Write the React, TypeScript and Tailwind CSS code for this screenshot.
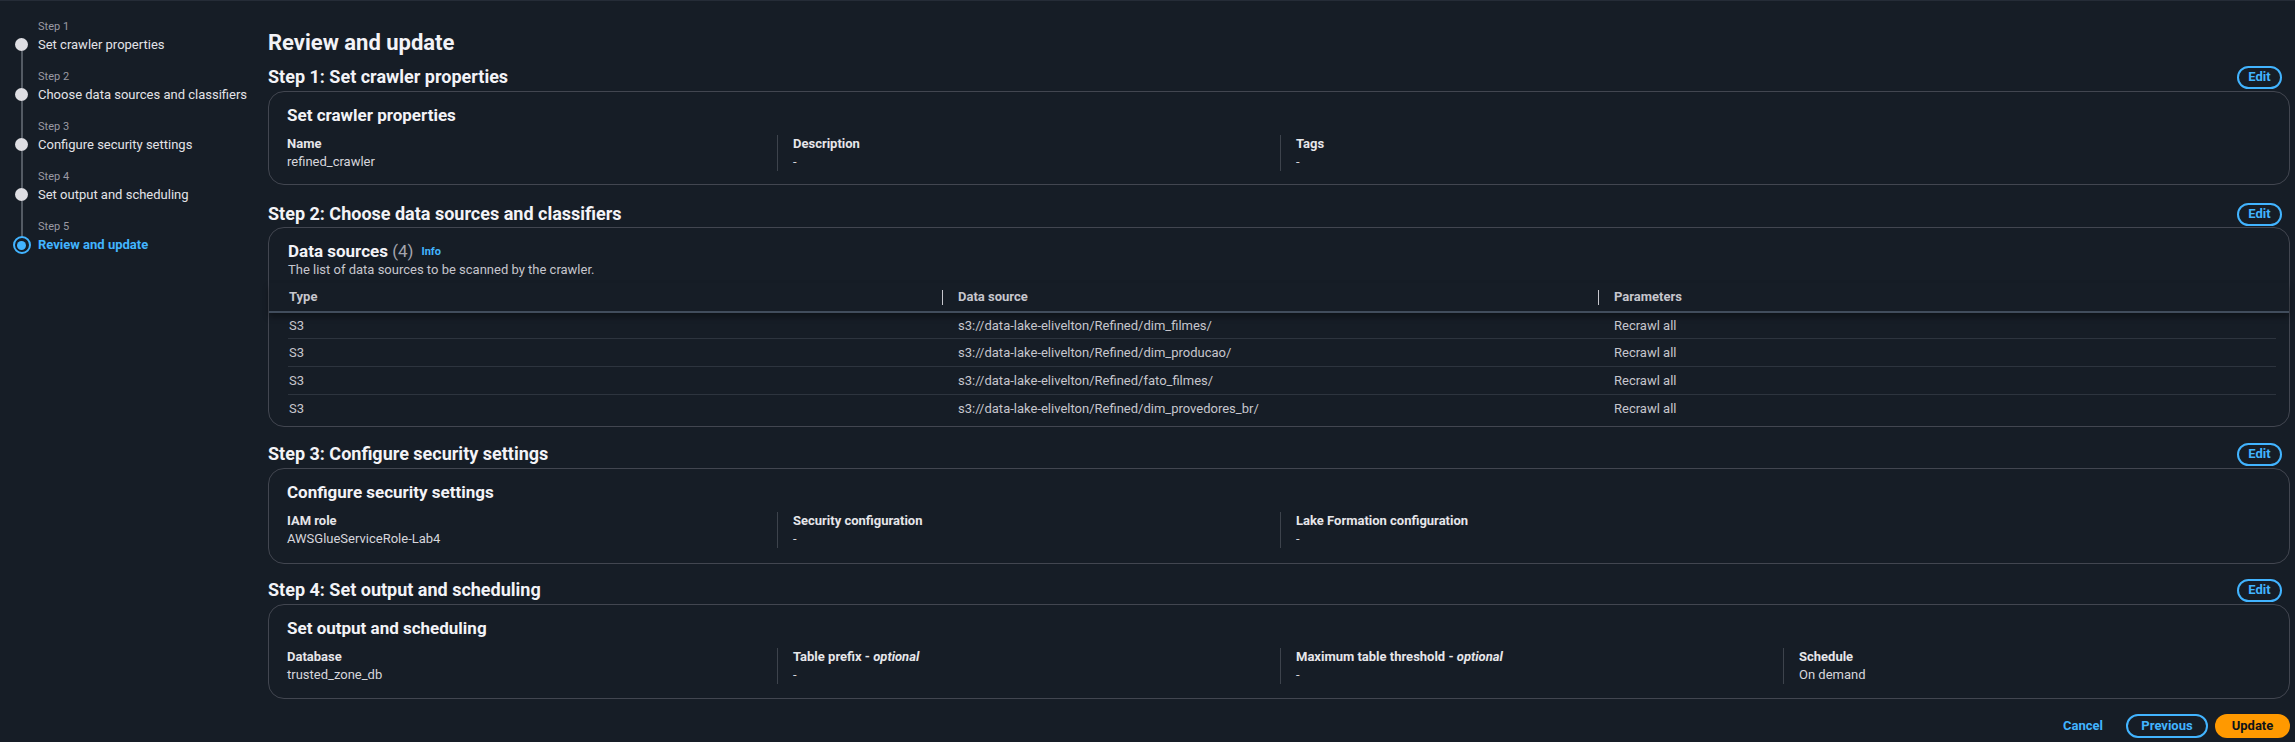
import React from "react";

const steps = [
  "Set crawler properties",
  "Choose data sources and classifiers",
  "Configure security settings",
  "Set output and scheduling",
  "Review and update",
];

const sources = [
  "s3://data-lake-elivelton/Refined/dim_filmes/",
  "s3://data-lake-elivelton/Refined/dim_producao/",
  "s3://data-lake-elivelton/Refined/fato_filmes/",
  "s3://data-lake-elivelton/Refined/dim_provedores_br/",
];

type Item = { label: string; optional?: boolean; value: string };

function Sidebar() {
  return (
    <nav className="w-[268px] shrink-0 pt-[18px] pl-[11px]">
      {steps.map((title, i) => {
        const last = i === steps.length - 1;
        return (
          <div key={title} className="flex">
            <div className="flex w-[21px] flex-col items-center">
              {last ? (
                <>
                  <div className="h-[17px] w-[2px] bg-[#545b64]" />
                  <div className="flex h-[18px] w-[18px] items-center justify-center rounded-full border-2 border-[#42b4ff]">
                    <div className="h-[9px] w-[9px] rounded-full bg-[#42b4ff]" />
                  </div>
                </>
              ) : (
                <>
                  <div className={"h-[19px] w-[2px] " + (i === 0 ? "bg-transparent" : "bg-[#545b64]")} />
                  <div className="h-[13px] w-[13px] rounded-full bg-[#dedee3]" />
                  <div className="w-[2px] flex-1 bg-[#545b64]" />
                </>
              )}
            </div>
            <div className={"ml-[6px] " + (last ? "" : "pb-[14px]")}>
              <div className="text-[11px] leading-[16px] text-[#9a9aa3]">Step {i + 1}</div>
              <div
                className={
                  "text-[13px] leading-[20px] " +
                  (last ? "font-bold text-[#42b4ff]" : "text-[#e3e3e8]")
                }
              >
                {title}
              </div>
            </div>
          </div>
        );
      })}
    </nav>
  );
}

function SectionHeader({ title }: { title: string }) {
  return (
    <div className="flex h-[24px] items-center justify-between pr-[8px]">
      <h2 className="text-[18px] leading-[24px] font-bold text-[#f3f3f7]">{title}</h2>
      <button className="flex h-[23px] w-[45px] items-center justify-center rounded-full border-2 border-[#42b4ff] text-[13px] font-bold text-[#42b4ff]">
        Edit
      </button>
    </div>
  );
}

function KeyValueCard({ title, items, pb }: { title: string; items: Item[]; pb: string }) {
  return (
    <div className={"mt-[2px] rounded-[16px] border border-[#424650] px-[18px] pt-[13px] " + pb}>
      <h3 className="text-[17px] leading-[20px] font-bold text-[#f3f3f7]">{title}</h3>
      <div className="mt-[10px] grid grid-cols-[490px_503px_503px_1fr]">
        {items.map((it, i) => (
          <div key={it.label} className={i === 0 ? "" : "border-l border-[#3d434c] pl-[15px]"}>
            <div className="text-[13px] leading-[18px] font-bold text-[#e6e6ea]">
              {it.label}
              {it.optional && (
                <>
                  {" - "}
                  <i>optional</i>
                </>
              )}
            </div>
            <div className="text-[13px] leading-[18px] text-[#d6d6dc]">{it.value}</div>
          </div>
        ))}
      </div>
    </div>
  );
}

function SourcesCard() {
  return (
    <div className="mt-[1px] rounded-[16px] border border-[#424650] pt-[13px] pb-[4px]">
      <div className="px-[19px]">
        <div className="flex items-center">
          <h3 className="text-[17px] leading-[20px] font-bold text-[#f3f3f7]">
            Data sources <span className="font-normal text-[#a4a4ad]">(4)</span>
          </h3>
          <span className="ml-[8px] mt-[2px] text-[11px] font-bold text-[#42b4ff]">Info</span>
        </div>
        <p className="text-[13px] leading-[18px] text-[#c6c6cd]">
          The list of data sources to be scanned by the crawler.
        </p>
      </div>
      <div className="mt-[4px] h-[30px] border-b-2 border-[#414d5c] px-[19px] shadow-[0_4px_6px_rgba(0,0,0,0.35)]">
        <div className="grid h-[28px] grid-cols-[654px_656px_1fr] items-center text-[13px] font-bold text-[#c6c6cd]">
          <div className="pl-[1px]">Type</div>
          <div className="flex items-center">
            <div className="h-[15px] w-px bg-[#c6c6cd]" />
            <span className="ml-[15px]">Data source</span>
          </div>
          <div className="flex items-center">
            <div className="h-[15px] w-px bg-[#c6c6cd]" />
            <span className="ml-[15px]">Parameters</span>
          </div>
        </div>
      </div>
      <div className="ml-[19px] mr-[13px]">
        {sources.map((s, i) => (
          <div
            key={s}
            className={
              "grid grid-cols-[654px_656px_1fr] items-center text-[13px] text-[#c6c6cd] " +
              (i === 0 ? "h-[25px]" : "h-[28px] border-t border-[#2d343e]")
            }
          >
            <div className="pl-[1px]">S3</div>
            <div className="pl-[16px]">{s}</div>
            <div className="pl-[16px]">Recrawl all</div>
          </div>
        ))}
      </div>
    </div>
  );
}

export default function App() {
  return (
    <div className="flex h-[742px] w-full border-t border-[#252c37] bg-[#161d26] font-[Roboto,'Liberation_Sans',sans-serif] antialiased">
      <Sidebar />
      <main className="flex-1 pr-[5px] pt-[30px]">
        <h1 className="text-[22px] leading-[24px] font-bold text-[#f3f3f7]">Review and update</h1>

        <section className="mt-[10px]">
          <SectionHeader title="Step 1: Set crawler properties" />
          <KeyValueCard
            pb="pb-[13px]"
            title="Set crawler properties"
            items={[
              { label: "Name", value: "refined_crawler" },
              { label: "Description", value: "-" },
              { label: "Tags", value: "-" },
            ]}
          />
        </section>

        <section className="mt-[17px]">
          <SectionHeader title="Step 2: Choose data sources and classifiers" />
          <SourcesCard />
        </section>

        <section className="mt-[15px]">
          <SectionHeader title="Step 3: Configure security settings" />
          <KeyValueCard
            pb="pb-[15px]"
            title="Configure security settings"
            items={[
              { label: "IAM role", value: "AWSGlueServiceRole-Lab4" },
              { label: "Security configuration", value: "-" },
              { label: "Lake Formation configuration", value: "-" },
            ]}
          />
        </section>

        <section className="mt-[14px]">
          <SectionHeader title="Step 4: Set output and scheduling" />
          <KeyValueCard
            pb="pb-[14px]"
            title="Set output and scheduling"
            items={[
              { label: "Database", value: "trusted_zone_db" },
              { label: "Table prefix", optional: true, value: "-" },
              { label: "Maximum table threshold", optional: true, value: "-" },
              { label: "Schedule", value: "On demand" },
            ]}
          />
        </section>

        <div className="mt-[15px] flex h-[24px] items-center justify-end">
          <button className="text-[13px] font-bold text-[#42b4ff]">Cancel</button>
          <button className="ml-[23px] flex h-[24px] w-[82px] items-center justify-center rounded-full border-2 border-[#42b4ff] text-[13px] font-bold text-[#42b4ff]">
            Previous
          </button>
          <button className="ml-[7px] flex h-[24px] w-[75px] items-center justify-center rounded-full bg-[#ff9900] text-[13px] font-bold text-[#0f141a]">
            Update
          </button>
        </div>
      </main>
    </div>
  );
}
